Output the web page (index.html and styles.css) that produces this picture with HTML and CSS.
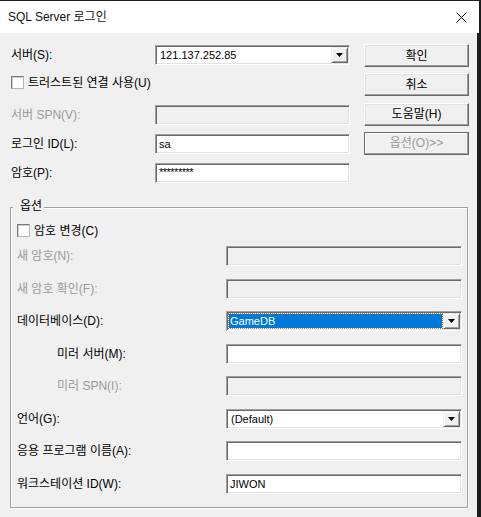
FILE: index.html
```html
<!DOCTYPE html>
<html lang="ko">
<head>
<meta charset="utf-8">
<title>SQL Server 로그인</title>
<link rel="stylesheet" href="styles.css">
</head>
<body>
<div class="window">
  <div class="titlebar">
    <span class="title">SQL Server 로그인</span>
    <svg class="close" width="11" height="11" viewBox="0 0 11 11"><path d="M0.5 0.5L10.5 10.5M10.5 0.5L0.5 10.5" stroke="#000" stroke-width="1" fill="none"/></svg>
  </div>
  <div class="content">
    <div class="top">
      <div class="form">
        <div class="row r-server">
          <span class="lbl">서버(S):</span>
          <div class="field combo w195"><span class="val">121.137.252.85</span><span class="drop"><svg width="7" height="4" viewBox="0 0 7 4"><polygon points="0,0 7,0 3.5,4" fill="#000"/></svg></span></div>
        </div>
        <div class="check-row r-trust">
          <span class="cb"></span><span>트러스트된 연결 사용(U)</span>
        </div>
        <div class="row r-spn">
          <span class="lbl dis">서버 SPN(V):</span>
          <div class="field w195 off"></div>
        </div>
        <div class="row r-gap">
          <span class="lbl">로그인 ID(L):</span>
          <div class="field w195"><span class="val">sa</span></div>
        </div>
        <div class="row r-gap">
          <span class="lbl">암호(P):</span>
          <div class="field w195"><span class="val pw">*********</span></div>
        </div>
      </div>
      <div class="buttons">
        <div class="btn">확인</div>
        <div class="btn">취소</div>
        <div class="btn">도움말(H)</div>
        <div class="btn btn-off">옵션(O)&gt;&gt;</div>
      </div>
    </div>

    <div class="group">
      <span class="legend">옵션</span>
      <div class="check-row">
        <span class="cb"></span><span>암호 변경(C)</span>
      </div>
      <div class="grow first">
        <span class="glbl dis">새 암호(N):</span>
        <div class="field w236 off"></div>
      </div>
      <div class="grow">
        <span class="glbl dis">새 암호 확인(F):</span>
        <div class="field w236 off"></div>
      </div>
      <div class="grow">
        <span class="glbl">데이터베이스(D):</span>
        <div class="field combo w236"><span class="val sel">GameDB</span><span class="drop"><svg width="7" height="4" viewBox="0 0 7 4"><polygon points="0,0 7,0 3.5,4" fill="#000"/></svg></span></div>
      </div>
      <div class="grow">
        <span class="glbl indent">미러 서버(M):</span>
        <div class="field w236"></div>
      </div>
      <div class="grow">
        <span class="glbl indent dis">미러 SPN(I):</span>
        <div class="field w236 off"></div>
      </div>
      <div class="grow">
        <span class="glbl">언어(G):</span>
        <div class="field combo w236"><span class="val">(Default)</span><span class="drop"><svg width="7" height="4" viewBox="0 0 7 4"><polygon points="0,0 7,0 3.5,4" fill="#000"/></svg></span></div>
      </div>
      <div class="grow">
        <span class="glbl">응용 프로그램 이름(A):</span>
        <div class="field w236"></div>
      </div>
      <div class="grow">
        <span class="glbl">워크스테이션 ID(W):</span>
        <div class="field w236"><span class="val">JIWON</span></div>
      </div>
    </div>
  </div>
</div>
</body>
</html>
```

FILE: styles.css
```css
html, body {
  margin: 0;
  padding: 0;
}

body {
  width: 481px;
  height: 517px;
  overflow: hidden;
  background: #1c1c1c;
  font-family: "Liberation Sans", "Noto Sans CJK KR", sans-serif;
  font-size: 12px;
  color: #000;
}

.window {
  margin-top: 1px;
  width: 479px;
}

.titlebar {
  height: 32px;
  width: 479px;
  background: #fff;
  display: flex;
  align-items: center;
  justify-content: space-between;
  padding: 0 12px 0 8px;
  box-sizing: border-box;
}

.title {
  font-size: 12px;
  line-height: 14px;
  color: #111;
}

.close {
  display: block;
}

.content {
  width: 477px;
  height: 484px;
  background: #f0f0f0;
  padding: 11px 0 0 11px;
  box-sizing: border-box;
}

.top {
  display: flex;
  align-items: flex-start;
}

.form {
  width: 339px;
  display: flex;
  flex-direction: column;
}

.row {
  display: flex;
  align-items: center;
  height: 20px;
}

.r-server {
  margin-top: 1px;
}

.r-trust {
  margin-top: 11px;
}

.r-spn {
  margin-top: 16px;
}

.r-gap {
  margin-top: 9px;
}

.lbl {
  width: 144px;
  line-height: 14px;
  white-space: nowrap;
}

.dis {
  color: #9a9a9a;
}

.check-row {
  display: flex;
  align-items: center;
  height: 13px;
  line-height: 14px;
  white-space: nowrap;
}

.cb {
  width: 13px;
  height: 13px;
  box-sizing: border-box;
  background: #fff;
  border: 1px solid;
  border-color: #7a7a7a #b5b5b5 #b5b5b5 #7a7a7a;
  box-shadow: inset 1px 1px 0 #d0d0d0;
  margin-right: 4px;
  flex: none;
}

.field {
  height: 20px;
  box-sizing: border-box;
  background: #fff;
  border: 1px solid;
  border-color: #a0a0a0 #fff #fff #a0a0a0;
  box-shadow: inset 1px 1px 0 #696969, inset -1px -1px 0 #e3e3e3;
  display: flex;
  align-items: center;
  overflow: hidden;
  flex: none;
}

.w195 {
  width: 195px;
}

.w236 {
  width: 236px;
}

.off {
  background: #f0f0f0;
}

.val {
  padding-left: 3px;
  line-height: 14px;
  font-size: 11px;
  white-space: nowrap;
}

.pw {
  font-size: 11px;
  letter-spacing: -0.5px;
  position: relative;
  top: -1px;
}

.combo {
  padding: 1px;
}

.combo .val {
  flex: 1;
  height: 16px;
  display: flex;
  align-items: center;
}

.combo .val.sel {
  background: #0078d7;
  color: #fff;
  padding-left: 1px;
  margin: 0 1px 0 1px;
  height: 14px;
  outline: 1px dotted #c08040;
  outline-offset: 0;
}

.drop {
  width: 17px;
  height: 16px;
  box-sizing: border-box;
  background: #f0f0f0;
  border: 1px solid;
  border-color: #f0f0f0 #696969 #696969 #f0f0f0;
  box-shadow: inset 1px 1px 0 #fff, inset -1px -1px 0 #a0a0a0;
  display: flex;
  align-items: center;
  justify-content: center;
  flex: none;
}

.drop svg {
  display: block;
}

.buttons {
  margin-left: 14px;
  display: flex;
  flex-direction: column;
  gap: 6.3px;
}

.btn {
  width: 105px;
  height: 23px;
  box-sizing: border-box;
  background: #f0f0f0;
  border: 1px solid;
  border-color: #fff #696969 #696969 #fff;
  box-shadow: inset -1px -1px 0 #a0a0a0, inset 1px 1px 0 #e3e3e3;
  display: flex;
  align-items: center;
  justify-content: center;
  line-height: 14px;
  white-space: nowrap;
}

.btn-off {
  color: #9a9a9a;
  border-color: #696969;
  box-shadow: inset -1px -1px 0 #a0a0a0, inset 1px 1px 0 #fff;
}

.group {
  position: relative;
  margin-top: 24px;
  margin-left: -1px;
  width: 458px;
  height: 301px;
  box-sizing: border-box;
  border: 1px solid #a0a0a0;
  box-shadow: 1px 1px 0 #fff, inset 1px 1px 0 #fff;
  padding: 16px 5px 0 6px;
}

.legend {
  position: absolute;
  top: -9px;
  left: 2px;
  padding: 0 2px 0 7px;
  background: #f0f0f0;
  line-height: 14px;
}

.grow {
  display: flex;
  align-items: center;
  height: 20px;
  margin-top: 12.5px;
}

.grow.first {
  margin-top: 9px;
}

.glbl {
  width: 209px;
  line-height: 14px;
  white-space: nowrap;
}

.glbl.indent {
  padding-left: 40px;
  box-sizing: border-box;
}
```
